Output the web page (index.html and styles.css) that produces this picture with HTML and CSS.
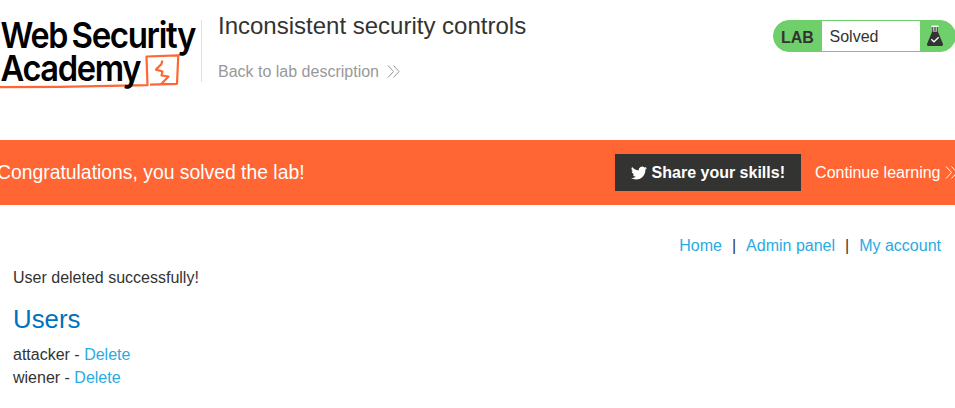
FILE: index.html
```html
<!DOCTYPE html>
<html lang="en">
<head>
<meta charset="utf-8">
<title>Inconsistent security controls</title>
<link rel="stylesheet" href="styles.css">
</head>
<body>
<header class="header">
  <svg class="logo" width="200" height="80" viewBox="0 14 200 80" role="img" aria-label="Web Security Academy">
    <path class="logo-line" d="M0 87.200 L60 86.800 L110 85.800 L147.500 85.200 L146.500 56.500 L178.300 55.300 L177 83.800 L150 84.600"/>
    <path class="logo-line" d="M162.300 60.500 L161.500 64 L156 69.600 L162.500 71.500 L161.500 75.500 L168.500 76.500 L161.500 83.800 L168 84"/>
    <g class="logo-text">
      <text x=".5" y="48" textLength="66.500" lengthAdjust="spacingAndGlyphs">Web</text>
      <text x="71.500" y="48" textLength="123.500" lengthAdjust="spacingAndGlyphs">Security</text>
      <text x=".5" y="81" textLength="139.500" lengthAdjust="spacingAndGlyphs">Academy</text>
    </g>
  </svg>
  <div class="title">
    <h1>Inconsistent security controls</h1>
    <a class="back" href="#">Back to lab description
      <svg class="chevrons" width="13" height="13" viewBox="0 0 13 13"><path d="M1 .5l5.500 6L1 12.500M6.500 .5l5.500 6-5.500 6"/></svg>
    </a>
  </div>
  <div class="status">
    <span class="status-label">LAB</span>
    <span class="status-value">Solved</span>
    <svg class="flask" width="18" height="22" viewBox="0 0 18 22">
      <path fill="#333332" d="M6 1h6v6l5 12q.5 2-1.500 2h-13Q.5 21 1 19L6 7z"/>
      <path fill="#f4faf4" d="M5.500 .5h7v1.500h-1.300v4.500H6.800V2H5.500z"/>
      <path fill="#777" d="M7.500 2h3v4h-3z"/>
      <path fill="none" stroke="#fff" stroke-width="1.300" d="M5.300 14.300l2.700 2.500 4.700-4.500"/>
    </svg>
  </div>
</header>
<section class="banner">
  <p>Congratulations, you solved the lab!</p>
  <a class="share" href="#">
    <svg width="16" height="14" viewBox="0 2 24 20"><path fill="#fff" d="M23.950 4.570a10 10 0 0 1-2.820.770 4.960 4.960 0 0 0 2.160-2.720c-.95.550-2 .950-3.130 1.180a4.920 4.920 0 0 0-8.380 4.480C7.690 8.090 4.070 6.130 1.640 3.160a4.920 4.920 0 0 0 1.520 6.570 4.900 4.900 0 0 1-2.230-.610v.060a4.920 4.920 0 0 0 3.950 4.820 5 5 0 0 1-2.210.090 4.940 4.940 0 0 0 4.600 3.420A9.870 9.870 0 0 1 0 19.540a14 14 0 0 0 7.550 2.210c9.050 0 14-7.500 14-13.980 0-.210 0-.420-.020-.630a9.940 9.940 0 0 0 2.420-2.570z"/></svg>
    Share your skills!
  </a>
  <a class="continue" href="#">Continue learning
    <svg class="chevrons" width="13" height="13" viewBox="0 0 13 13"><path d="M1 .5l5.500 6L1 12.500M6.500 .5l5.500 6-5.500 6"/></svg>
  </a>
</section>
<main>
  <nav><a href="#">Home</a><span>|</span><a href="#">Admin panel</a><span>|</span><a href="#">My account</a></nav>
  <p class="message">User deleted successfully!</p>
  <h2>Users</h2>
  <div class="user">attacker - <a href="#">Delete</a></div>
  <div class="user">wiener - <a href="#">Delete</a></div>
</main>
</body>
</html>
```
FILE: styles.css
```css
body {
  margin: 0;
  overflow: hidden;
  background: #fff;
  color: #333332;
  font: 16px/23px "Liberation Sans", Arial, sans-serif;
}
a { color: #29abe2; text-decoration: none; }
p, h1, h2 { margin: 0; font-weight: 400; }
svg { display: block; flex: none; }
.header { display: flex; align-items: flex-start; height: 140px; }
.logo { margin-top: 14px; }
.logo-text { font: 600 36px Inter, sans-serif; letter-spacing: -1.5px; fill: #000; }
.logo-line { fill: none; stroke: #ff6633; stroke-width: 2.2; stroke-linejoin: round; }
.title {
  display: flex;
  flex-direction: column;
  justify-content: space-between;
  height: 62px;
  margin: 20px 0 0 1px;
  padding-left: 16px;
  border-left: 1px solid #e0e0e0;
}
.title h1 { margin-top: -9px; font-size: 24px; line-height: 30px; }
.back { display: flex; align-items: center; gap: 8px; margin-bottom: -1px; color: #999; }
.chevrons { fill: none; stroke: currentColor; stroke-width: 1; }
.status {
  display: flex;
  align-items: center;
  box-sizing: border-box;
  width: 183px;
  height: 32px;
  margin: 20px -1px 0 auto;
  border: 1px solid #6fcf6b;
  border-radius: 16px;
  overflow: hidden;
  background: #6fcf6b;
}
.status-label { width: 48px; padding: 3px 0 0 7px; font-weight: 700; }
.status-label, .status-value { flex: none; box-sizing: border-box; }
.status-value { width: 98px; height: 30px; padding-left: 7.500px; background: #fff; line-height: 31px; }
.flask { margin-left: 6px; }
.banner {
  display: flex;
  align-items: center;
  height: 65px;
  background: #ff6633;
  color: #fff;
}
.banner p { margin: 0 auto 0 -3px; font-size: 19.35px; }
.share {
  display: flex;
  align-items: center;
  gap: 5px;
  box-sizing: border-box;
  width: 186px;
  height: 37px;
  padding-left: 16px;
  background: #333332;
  color: #fff;
  font-weight: 700;
  white-space: nowrap;
}
.continue { display: flex; align-items: center; gap: 4px; margin: 0 -2.500px 0 14.500px; color: #fff; white-space: nowrap; }
main { padding: 29px 13px 0; }
nav { display: flex; justify-content: flex-end; padding-right: 1px; }
nav span { margin: 0 10px; }
.message { margin-top: 9px; }
h2 { margin: 15px 0 9px; color: #0071bc; font-size: 25.8px; line-height: 30px; }
```
